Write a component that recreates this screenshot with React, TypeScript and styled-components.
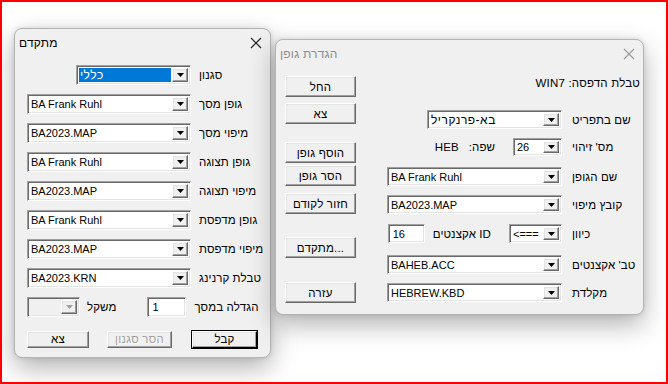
import React from "react";
import styled, { createGlobalStyle, css } from "styled-components";

const GlobalStyle = createGlobalStyle`
  html, body {
    margin: 0;
    padding: 0;
    background: #ffffff;
  }
  body {
    font-family: "Liberation Sans", Arial, sans-serif;
  }
`;

const Desktop = styled.div`
  position: relative;
  width: 668px;
  height: 384px;
  box-sizing: border-box;
  border: 2px solid #ff0000;
  background: #ffffff;
  overflow: hidden;
  direction: ltr;
`;

// floating dialog windows on the desktop
const Window = styled.div<{ $x: number; $y: number; $w: number; $h: number }>`
  position: absolute;
  left: ${(p) => p.$x}px;
  top: ${(p) => p.$y}px;
  width: ${(p) => p.$w}px;
  height: ${(p) => p.$h}px;
  box-sizing: border-box;
  background: #f0f0f0;
  border: 1px solid #b4b4b4;
  border-radius: 8px;
  box-shadow: 0 10px 26px rgba(0, 0, 0, 0.3), 0 0 5px rgba(0, 0, 0, 0.12);
  display: flex;
  flex-direction: column;
`;

const TitleBar = styled.div<{ $active?: boolean; $h: number }>`
  height: ${(p) => p.$h}px;
  flex: none;
  display: flex;
  align-items: center;
  justify-content: space-between;
  padding: 0 8px 0 4px;
  font-size: 12px;
  color: ${(p) => (p.$active ? "#000000" : "#8c8c8c")};
`;

const Title = styled.span`
  direction: rtl;
  letter-spacing: 0.2px;
`;

const CloseIcon = ({ color }: { color: string }) => (
  <svg width="12" height="12" viewBox="0 0 12 12">
    <path d="M1 1 L11 11 M11 1 L1 11" stroke={color} strokeWidth="1.1" />
  </svg>
);

const sunken = css`
  box-sizing: border-box;
  border-top: 1px solid #a0a0a0;
  border-left: 1px solid #a0a0a0;
  border-bottom: 1px solid #ffffff;
  border-right: 1px solid #ffffff;
  box-shadow: inset 1px 1px 0 #696969, inset -1px -1px 0 #e3e3e3;
`;

const raised = css`
  box-sizing: border-box;
  background: #f0f0f0;
  border-top: 1px solid #ffffff;
  border-left: 1px solid #ffffff;
  border-bottom: 1px solid #696969;
  border-right: 1px solid #696969;
  box-shadow: inset -1px -1px 0 #a0a0a0, inset 1px 1px 0 #e3e3e3;
`;

const ComboBox = styled.div<{ $w: number; $h?: number; $disabled?: boolean }>`
  ${sunken};
  width: ${(p) => p.$w}px;
  height: ${(p) => p.$h ?? 20}px;
  flex: none;
  display: flex;
  align-items: stretch;
  padding: 2px;
  background: ${(p) => (p.$disabled ? "#f0f0f0" : "#ffffff")};
`;

const ComboText = styled.div<{ $selected?: boolean; $heb?: boolean }>`
  flex: 1;
  display: flex;
  align-items: center;
  padding-left: 1px;
  margin-right: 1px;
  font-size: ${(p) => (p.$heb ? 12 : 11)}px;
  letter-spacing: ${(p) => (p.$heb ? "0.5px" : "0")};
  white-space: nowrap;
  overflow: hidden;
  color: ${(p) => (p.$selected ? "#ffffff" : "#000000")};
  background: ${(p) => (p.$selected ? "#0078d7" : "transparent")};
`;

const DropButton = styled.div`
  ${raised};
  width: 16px;
  flex: none;
  display: flex;
  align-items: center;
  justify-content: center;
`;

const Arrow = ({ disabled }: { disabled?: boolean }) => (
  <svg width="7" height="4" viewBox="0 0 7 4">
    <polygon points="0,0 7,0 3.5,4" fill={disabled ? "#a0a0a0" : "#000000"} />
  </svg>
);

const Combo = ({
  w,
  h,
  text = "",
  selected,
  heb,
  disabled,
}: {
  w: number;
  h?: number;
  text?: string;
  selected?: boolean;
  heb?: boolean;
  disabled?: boolean;
}) => (
  <ComboBox $w={w} $h={h} $disabled={disabled}>
    <ComboText $selected={selected} $heb={heb}>
      {text}
    </ComboText>
    <DropButton>
      <Arrow disabled={disabled} />
    </DropButton>
  </ComboBox>
);

const TextInput = styled.div<{ $w: number; $h?: number; $ml?: number }>`
  ${sunken};
  width: ${(p) => p.$w}px;
  height: ${(p) => p.$h ?? 20}px;
  margin-left: ${(p) => p.$ml ?? 0}px;
  flex: none;
  background: #ffffff;
  display: flex;
  align-items: center;
  padding-left: 4px;
  font-size: 11px;
`;

const Label = styled.span<{ $ml?: number; $mr?: number }>`
  direction: rtl;
  font-size: 11.5px;
  letter-spacing: 0.1px;
  white-space: nowrap;
  margin-left: ${(p) => p.$ml ?? 0}px;
  margin-right: ${(p) => p.$mr ?? 0}px;
`;

const Button = styled.button<{
  $w: number;
  $h: number;
  $mt?: number;
  $ml?: number;
  $default?: boolean;
  $disabled?: boolean;
}>`
  ${raised};
  width: ${(p) => p.$w}px;
  height: ${(p) => p.$h}px;
  margin: ${(p) => p.$mt ?? 0}px 0 0 ${(p) => p.$ml ?? 0}px;
  flex: none;
  padding: 0;
  direction: ltr;
  unicode-bidi: isolate;
  font-family: "Liberation Sans", Arial, sans-serif;
  font-size: 11.5px;
  letter-spacing: 0.2px;
  color: ${(p) => (p.$disabled ? "#a0a0a0" : "#000000")};
  text-shadow: ${(p) => (p.$disabled ? "1px 1px 0 #ffffff" : "none")};
  ${(p) =>
    p.$default &&
    css`
      outline: 1px solid #000000;
      border-bottom-color: #000;
      border-right-color: #000;
    `}
`;

/* ---------- advanced dialog (left) ---------- */

const AdvBody = styled.div`
  flex: 1;
  display: grid;
  grid-auto-rows: 20px;
  row-gap: 9px;
  align-content: start;
  padding: 8px 0 0 12px;
`;

const AdvRow = styled.div`
  display: flex;
  align-items: center;
`;

const AdvField = styled.div`
  width: 164px;
  display: flex;
  justify-content: flex-end;
  margin-right: 8px;
`;

const AdvButtons = styled.div`
  display: flex;
  align-items: center;
  margin-top: 6px;
`;

const advRows: [string, string][] = [
  ["גופן מסך", "BA Frank Ruhl"],
  ["מיפוי מסך", "BA2023.MAP"],
  ["גופן תצוגה", "BA Frank Ruhl"],
  ["מיפוי תצוגה", "BA2023.MAP"],
  ["גופן מדפסת", "BA Frank Ruhl"],
  ["מיפוי מדפסת", "BA2023.MAP"],
  ["טבלת קרנינג", "BA2023.KRN"],
];

const AdvancedDialog = () => (
  <Window $x={12} $y={26} $w={257} $h={330}>
    <TitleBar $active $h={28}>
      <Title>מתקדם</Title>
      <CloseIcon color="#1a1a1a" />
    </TitleBar>
    <AdvBody>
      <AdvRow>
        <AdvField>
          <Combo w={115} text="כללי" selected heb />
        </AdvField>
        <Label>סגנון</Label>
      </AdvRow>
      {advRows.map(([label, value]) => (
        <AdvRow key={label}>
          <AdvField>
            <Combo w={164} text={value} />
          </AdvField>
          <Label>{label}</Label>
        </AdvRow>
      ))}
      <AdvRow>
        <Combo w={53} disabled />
        <Label $ml={7}>משקל</Label>
        <TextInput $w={39} $ml={31}>
          1
        </TextInput>
        <Label $ml={8}>הגדלה במסך</Label>
      </AdvRow>
      <AdvButtons>
        <Button $w={62} $h={17}>
          צא
        </Button>
        <Button $w={65} $h={17} $ml={18} $disabled>
          הסר סגנון
        </Button>
        <Button $w={65} $h={17} $ml={20} $default>
          קבל
        </Button>
      </AdvButtons>
    </AdvBody>
  </Window>
);

/* ---------- font settings dialog (right) ---------- */

const FontBody = styled.div`
  flex: 1;
  display: flex;
  padding-left: 9px;
`;

const ButtonColumn = styled.div`
  width: 71px;
  display: flex;
  flex-direction: column;
`;

const FormColumn = styled.div`
  flex: 1;
  display: flex;
  flex-direction: column;
  margin-left: 31px;
  padding-right: 3px;
`;

const Header = styled.div`
  direction: rtl;
  text-align: right;
  font-size: 11.5px;
  letter-spacing: 0.2px;
  margin-top: 10px;
  height: 14px;
`;

const FormRow = styled.div<{ $mt: number }>`
  display: flex;
  align-items: center;
  height: 19px;
  margin-top: ${(p) => p.$mt}px;
`;

const FormField = styled.div`
  width: 175px;
  display: flex;
  align-items: center;
  justify-content: flex-end;
  margin-right: 10px;
`;

const Ltr = styled.span`
  direction: ltr;
  unicode-bidi: isolate;
`;

const FontDialog = () => (
  <Window $x={273} $y={37} $w={369} $h={276}>
    <TitleBar $h={27}>
      <Title>הגדרת גופן</Title>
      <CloseIcon color="#9a9a9a" />
    </TitleBar>
    <FontBody>
      <ButtonColumn>
        <Button $w={71} $h={21} $mt={9}>
          החל
        </Button>
        <Button $w={71} $h={21} $mt={6}>
          צא
        </Button>
        <Button $w={71} $h={21} $mt={18}>
          הוסף גופן
        </Button>
        <Button $w={71} $h={21} $mt={2}>
          הסר גופן
        </Button>
        <Button $w={71} $h={21} $mt={7}>
          חזור לקודם
        </Button>
        <Button $w={71} $h={21} $mt={23}>
          <Ltr dir="ltr">{"\u200Eמתקדם...\u200E"}</Ltr>
        </Button>
        <Button $w={71} $h={21} $mt={24}>
          עזרה
        </Button>
      </ButtonColumn>
      <FormColumn>
        <Header>טבלת הדפסה: WIN7</Header>
        <FormRow $mt={19}>
          <FormField>
            <Combo w={135} h={19} text="בא-פרנקריל" heb />
          </FormField>
          <Label>שם בתפריט</Label>
        </FormRow>
        <FormRow $mt={8}>
          <FormField>
            <Label $mr={10}>HEB</Label>
            <Label $mr={18}>שפה:</Label>
            <Combo w={49} h={18} text="26" />
          </FormField>
          <Label>מס' זיהוי</Label>
        </FormRow>
        <FormRow $mt={11}>
          <FormField>
            <Combo w={175} h={19} text="BA Frank Ruhl" />
          </FormField>
          <Label>שם הגופן</Label>
        </FormRow>
        <FormRow $mt={9}>
          <FormField>
            <Combo w={175} h={19} text="BA2023.MAP" />
          </FormField>
          <Label>קובץ מיפוי</Label>
        </FormRow>
        <FormRow $mt={10}>
          <FormField>
            <TextInput $w={37} $h={19}>
              16
            </TextInput>
            <Label $ml={8} $mr={18}>
              ID אקצנטים
            </Label>
            <Combo w={53} h={19} text="<===" />
          </FormField>
          <Label>כיוון</Label>
        </FormRow>
        <FormRow $mt={12}>
          <FormField>
            <Combo w={175} h={19} text="BAHEB.ACC" />
          </FormField>
          <Label>טב' אקצנטים</Label>
        </FormRow>
        <FormRow $mt={9}>
          <FormField>
            <Combo w={175} h={19} text="HEBREW.KBD" />
          </FormField>
          <Label>מקלדת</Label>
        </FormRow>
      </FormColumn>
    </FontBody>
  </Window>
);

export default function App() {
  return (
    <>
      <GlobalStyle />
      <Desktop>
        <AdvancedDialog />
        <FontDialog />
      </Desktop>
    </>
  );
}
